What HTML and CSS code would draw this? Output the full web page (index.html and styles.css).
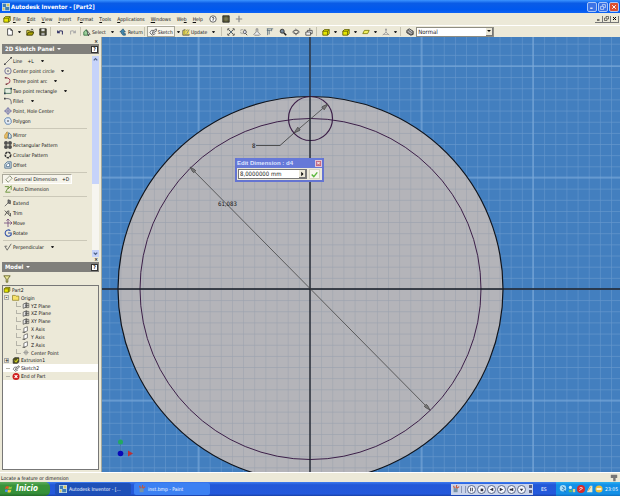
FILE: index.html
```html
<!DOCTYPE html>
<html lang="en">
<head>
    <meta charset="UTF-8">
    <meta name="viewport" content="width=device-width, initial-scale=1.0">
    <title>Autodesk Inventor - [Part2]</title>
    <link rel="stylesheet" href="styles.css">
</head>
<body>

<!-- Shared icons -->
<svg class="hidden">
    <symbol id="i-cube" viewBox="0 0 10 10"><path d="M1 4l2-2h6v5l-2 2H1z" fill="#e8e800" stroke="#565600"/><path d="M1 4h6v5M7 4l2-2" fill="none" stroke="#565600"/></symbol>
    <symbol id="i-new" viewBox="0 0 10 10"><path d="M2 1h4l2 2v6H2z" fill="#fff" stroke="#333"/><path d="M6 1v2h2" fill="none" stroke="#333"/></symbol>
    <symbol id="i-open" viewBox="0 0 10 10"><path d="M1 9V3h3l1 1h3v1" fill="#f2e65a" stroke="#444400"/><path d="M1 9l2-4h7L8 9z" fill="#a8a000" stroke="#333300"/><path d="M6 2q2-2 3 1" fill="none" stroke="#333"/></symbol>
    <symbol id="i-save" viewBox="0 0 10 10"><path d="M1 1h8v8H1z" fill="#4b4b30" stroke="#222"/><path d="M3 1h4v3H3z" fill="#ddd"/><path d="M3 6h4v3H3z" fill="#aaa"/></symbol>
    <symbol id="i-undo" viewBox="0 0 10 10"><path d="M2 3v3h3M2 6q3-4 6-2v4" fill="none" stroke="#333366" stroke-width="1.3"/></symbol>
    <symbol id="i-redo" viewBox="0 0 10 10"><path d="M8 3v3H5M8 6q-3-4-6-2v4" fill="none" stroke="#aaa" stroke-width="1.3"/></symbol>
    <symbol id="i-select" viewBox="0 0 10 10"><path d="M1 9V5l3-3 2 4v3z" fill="#9cd09c" stroke="#2d6b3a"/><path d="M5 3l4 5-2 0 0 2z" fill="#fff" stroke="#333" stroke-width=".8"/></symbol>
    <symbol id="i-return" viewBox="0 0 10 10"><path d="M5 1L1 5h2v2l2 2h3V7H6V5h2z" fill="#3f87ad" stroke="#1c4460" stroke-width=".7"/></symbol>
    <symbol id="i-sketch" viewBox="0 0 10 10"><path d="M6 3H3L1 6l3 3 4-2" fill="#fff" stroke="#555"/><path d="M4 7l1-3 4-3 1 2-4 3z" fill="#ddd" stroke="#333" stroke-width=".8"/></symbol>
    <symbol id="i-update" viewBox="0 0 10 10"><path d="M1 3l3-1v6h5v1H1z" fill="#e5d640" stroke="#555"/><path d="M4 2h5v6H4z" fill="#eedf58"/><path d="M6 7l3-5M5 4l2-2" stroke="#778" fill="none"/></symbol>
    <symbol id="i-zoomall" viewBox="0 0 10 10"><path d="M1 3V1h2M7 1h2v2M9 7v2H7M3 9H1V7M2 2l2 2M8 2L6 4M2 8l2-2M8 8L6 6" fill="none" stroke="#333"/><circle cx="5" cy="5" r="1.5" fill="#556a78"/></symbol>
    <symbol id="i-zoomwin" viewBox="0 0 10 10"><path d="M1 2h6v5H1z" fill="none" stroke="#777" stroke-dasharray="1 1"/><circle cx="6" cy="5" r="2" fill="#dde" stroke="#555"/><path d="M7 7l2 2" stroke="#333"/></symbol>
    <symbol id="i-zoom" viewBox="0 0 10 10"><path d="M4 1h2v4l3 3-1 1H2L1 8l3-3z" fill="#eee" stroke="#777"/></symbol>
    <symbol id="i-pan" viewBox="0 0 10 10"><path d="M1 1h8M1 3h5M2 1v8M4 3v5M7 1v3" fill="none" stroke="#556a78"/></symbol>
    <symbol id="i-glass" viewBox="0 0 10 10"><circle cx="4" cy="4" r="2.5" fill="#778899" stroke="#222"/><path d="M6 6l3 3" stroke="#222" stroke-width="2"/></symbol>
    <symbol id="i-rotate3" viewBox="0 0 10 10"><path d="M5 1l3 3-3 5-3-5z" fill="none" stroke="#777"/><ellipse cx="5" cy="5" rx="4" ry="2" fill="none" stroke="#555"/></symbol>
    <symbol id="i-look" viewBox="0 0 10 10"><path d="M1 5h6v4H1zM3 5V3h6v4H7" fill="#eee" stroke="#444"/><path d="M6 0v3" stroke="#555"/></symbol>
    <symbol id="i-plane" viewBox="0 0 10 10"><path d="M1 7l2-4h6L7 7z" fill="#f2f060" stroke="#777700"/></symbol>
    <symbol id="i-tree" viewBox="0 0 10 10"><path d="M5 1v4M1 9l4-4 4 4M1 8h8" fill="none" stroke="#999"/><path d="M4 1h2v2H4z" fill="#999"/></symbol>
    <symbol id="i-mat" viewBox="0 0 10 10"><path d="M1 3l3-2 5 3v4L6 9 1 6z" fill="#777" stroke="#333"/><path d="M2 4l5 3M4 2l4 3" stroke="#ddd"/></symbol>
    <symbol id="i-help" viewBox="0 0 10 10"><circle cx="5" cy="5" r="4" fill="#fff" stroke="#444"/><path d="M4 4q0-1 1-1t1 1-1 2v1" fill="none" stroke="#222"/></symbol>
    <symbol id="i-dark" viewBox="0 0 10 10"><path d="M1 1h8v8H1z" fill="#555533" stroke="#222"/><path d="M2 4h6M2 6h6M5 2v6" stroke="#999977" stroke-width=".6"/></symbol>
    <symbol id="i-cross" viewBox="0 0 10 10"><path d="M5 1v8M1 5h8" stroke="#888" stroke-width="1.5"/></symbol>
    <symbol id="i-line" viewBox="0 0 10 10"><path d="M1 9L9 1" stroke="#555"/><path d="M0 8h2v2H0zM8 0h2v2H8z" fill="#444"/></symbol>
    <symbol id="i-circle" viewBox="0 0 10 10"><circle cx="5" cy="5" r="4" fill="none" stroke="#5a5a90"/><circle cx="5" cy="5" r="1" fill="#445"/></symbol>
    <symbol id="i-arc" viewBox="0 0 10 10"><path d="M2 1q7 0 5 6l-4 2" fill="none" stroke="#a03c50" stroke-width="1.2"/><path d="M1 0h2v2H1zM2 8h2v2H2z" fill="#744"/></symbol>
    <symbol id="i-rect" viewBox="0 0 10 10"><path d="M1 2h8v6H1z" fill="#e4ece0" stroke="#3f6a50"/><path d="M0 7h2v2H0zM8 1h2v2H8z" fill="#345"/></symbol>
    <symbol id="i-fillet" viewBox="0 0 10 10"><path d="M1 2h4q4 0 4 4v3" fill="none" stroke="#556"/><path d="M0 1h2v2H0z" fill="#444"/></symbol>
    <symbol id="i-point" viewBox="0 0 10 10"><circle cx="5" cy="5" r="3" fill="none" stroke="#6a6aa5"/><path d="M5 0v10M0 5h10" stroke="#6a6aa5"/></symbol>
    <symbol id="i-poly" viewBox="0 0 10 10"><path d="M3 1h4l2 3v3L7 9H3L1 6V3z" fill="#e3ebf5" stroke="#4671a8"/><circle cx="5" cy="5" r="1" fill="#333"/></symbol>
    <symbol id="i-mirror" viewBox="0 0 10 10"><path d="M1 9V5l3-4v8z" fill="#f5cf77" stroke="#b9862c"/><path d="M6 2l3 3v4H5z" fill="#dfe8ef" stroke="#326080"/></symbol>
    <symbol id="i-rpat" viewBox="0 0 10 10"><path d="M1 1h3v3H1zM6 1h3v3H6zM1 6h3v3H1zM6 6h3v3H6z" fill="#777" stroke="#222"/></symbol>
    <symbol id="i-cpat" viewBox="0 0 10 10"><circle cx="5" cy="5" r="3.4" fill="none" stroke="#333" stroke-width="2" stroke-dasharray="3 1"/></symbol>
    <symbol id="i-offset" viewBox="0 0 10 10"><path d="M1 9V4l3-3h5v8z" fill="#cfdce5" stroke="#4c6f8a"/><path d="M3 7V5l2-2h2v4z" fill="#fff" stroke="#4c6f8a"/></symbol>
    <symbol id="i-dim" viewBox="0 0 10 10"><path d="M1 6l5-5 3 3-5 5zM1 6l3 3M6 1l3 3" fill="none" stroke="#8a9078"/></symbol>
    <symbol id="i-auto" viewBox="0 0 10 10"><path d="M1 2h5L2 9h6M5 5l4-4v5" fill="none" stroke="#6e9440" stroke-width="1.2"/></symbol>
    <symbol id="i-extend" viewBox="0 0 10 10"><path d="M1 9l5-5M5 1l3 1v4L5 5z" fill="#777" stroke="#555"/></symbol>
    <symbol id="i-trim" viewBox="0 0 10 10"><path d="M1 2l7 7M1 8l4-6M6 2v4M8 5v4" fill="none" stroke="#333"/></symbol>
    <symbol id="i-move" viewBox="0 0 10 10"><path d="M5 0v10M0 5h10M8 3l2 2-2 2M3 2l2-2 2 2" fill="none" stroke="#704878"/></symbol>
    <symbol id="i-rot" viewBox="0 0 10 10"><path d="M8 2a4 4 0 1 0 1 5M5 5h4v3" fill="none" stroke="#2f4fa8" stroke-width="1.3"/></symbol>
    <symbol id="i-perp" viewBox="0 0 10 10"><path d="M1 4l3 5 5-8M1 4h3" fill="none" stroke="#555"/></symbol>
    <symbol id="i-folder" viewBox="0 0 10 10"><path d="M0 2h4l1 1h4v6H0z" fill="#f7e26a" stroke="#8a7a20"/></symbol>
    <symbol id="i-wplane" viewBox="0 0 10 10"><path d="M1 3l5-2v6L1 9z" fill="#fff" stroke="#444"/><path d="M4 2h5v6H4zM6 2v6M4 5h5" fill="none" stroke="#555"/></symbol>
    <symbol id="i-axis" viewBox="0 0 10 10"><path d="M2 3l5-2v6L2 9z" fill="#fff" stroke="#555"/><path d="M0 9h4" stroke="#333"/></symbol>
    <symbol id="i-cpoint" viewBox="0 0 10 10"><path d="M5 1v8M1 5h8M3 3h4v4H3z" fill="none" stroke="#888" stroke-width=".8"/></symbol>
    <symbol id="i-extr" viewBox="0 0 10 10"><path d="M1 3l2-2h6v6L7 9H1z" fill="#555520" stroke="#222"/><path d="M3 5l2 2 3-4" fill="none" stroke="#d5d520" stroke-width="1.5"/></symbol>
    <symbol id="i-end" viewBox="0 0 10 10"><circle cx="5" cy="5" r="5" fill="#cf1d1d"/><path d="M3 3l4 4M7 3L3 7" stroke="#fff" stroke-width="1.6"/></symbol>
    <symbol id="i-funnel" viewBox="0 0 10 10"><path d="M1 1h8L6 5v4H4V5z" fill="#eeea9a" stroke="#55551a"/></symbol>
    <symbol id="i-flag" viewBox="0 0 10 10"><path d="M1 2q2-1 4 0L4 5q-2-1-4 0z" fill="#e8542a"/><path d="M5 2q2 1 4 0L8 5q-2 1-4 0z" fill="#8ac43e"/><path d="M0 6q2-1 4 0L3 9Q1 8-1 9z" fill="#4d8eea"/><path d="M4 6q2 1 4 0L7 9Q5 10 3 9z" fill="#f5cd3c"/></symbol>
    <symbol id="i-app" viewBox="0 0 10 10"><path d="M0 0h10v10H0z" fill="#c6dbe8"/><path d="M1 1h4v4H1zM4 5h5v4H4z" fill="#3f7fb5"/><path d="M6 1h3v3H6zM1 6h2v3H1z" fill="#d8c65a"/></symbol>
    <symbol id="i-paint" viewBox="0 0 10 10"><path d="M2 4h5v5H2z" fill="#7892a5"/><path d="M3 4L2 1M5 4l1-4M6 4l3-2" stroke="#c45838" stroke-width="1.4"/></symbol>
</svg>

<header class="titlebar">
    <svg class="icon"><use href="#i-app"/></svg>
    <h1>Autodesk Inventor - [Part2]</h1>
    <div class="window-buttons">
        <button aria-label="Minimize"><svg viewBox="0 0 10 10"><path d="M2 7h4" stroke="#fff" stroke-width="2"/></svg></button>
        <button aria-label="Restore"><svg viewBox="0 0 10 10"><path d="M4 3V1h5v5H7M1 4h5v5H1z" fill="none" stroke="#fff"/></svg></button>
        <button class="close" aria-label="Close"><svg viewBox="0 0 10 10"><path d="M2 2l6 6M8 2L2 8" stroke="#fff" stroke-width="1.6"/></svg></button>
    </div>
</header>

<nav class="menubar">
    <svg class="icon"><use href="#i-cube"/></svg>
    <button><u>F</u>ile</button>
    <button><u>E</u>dit</button>
    <button><u>V</u>iew</button>
    <button><u>I</u>nsert</button>
    <button>F<u>o</u>rmat</button>
    <button><u>T</u>ools</button>
    <button><u>A</u>pplications</button>
    <button><u>W</u>indows</button>
    <button>We<u>b</u></button>
    <button><u>H</u>elp</button>
    <div class="menu-icons">
        <button aria-label="Help topics"><svg class="icon"><use href="#i-help"/></svg></button>
        <button aria-label="Design doctor"><svg class="icon"><use href="#i-dark"/></svg></button>
        <button aria-label="Add"><svg class="icon"><use href="#i-cross"/></svg></button>
    </div>
    <div class="doc-buttons">
        <button aria-label="Minimize document"><svg viewBox="0 0 10 10"><path d="M2 8h5" stroke="#000" stroke-width="2"/></svg></button>
        <button aria-label="Restore document"><svg viewBox="0 0 10 10"><path d="M4 3V1h5v5H7M1 4h5v5H1z" fill="none" stroke="#000"/></svg></button>
        <button aria-label="Close document"><svg viewBox="0 0 10 10"><path d="M2 2l6 6M8 2L2 8" stroke="#000" stroke-width="2"/></svg></button>
    </div>
</nav>

<div class="toolbar">
    <button class="tool" aria-label="New"><svg class="icon"><use href="#i-new"/></svg></button>
    <span class="arrow"></span>
    <button class="tool" aria-label="Open"><svg class="icon"><use href="#i-open"/></svg></button>
    <button class="tool" aria-label="Save"><svg class="icon"><use href="#i-save"/></svg></button>
    <span class="divider"></span>
    <button class="tool" aria-label="Undo"><svg class="icon"><use href="#i-undo"/></svg></button>
    <button class="tool" aria-label="Redo"><svg class="icon"><use href="#i-redo"/></svg></button>
    <span class="divider"></span>
    <button class="text-tool"><svg class="icon"><use href="#i-select"/></svg>Select</button>
    <span class="arrow wide"></span>
    <button class="text-tool"><svg class="icon"><use href="#i-return"/></svg>Return</button>
    <span class="divider"></span>
    <button class="text-tool pressed"><svg class="icon"><use href="#i-sketch"/></svg>Sketch</button>
    <span class="arrow"></span>
    <button class="text-tool"><svg class="icon"><use href="#i-update"/></svg>Update</button>
    <span class="arrow wide"></span>
    <span class="divider"></span>
    <button class="tool" aria-label="Zoom all"><svg class="icon"><use href="#i-zoomall"/></svg></button>
    <button class="tool" aria-label="Zoom window"><svg class="icon"><use href="#i-zoomwin"/></svg></button>
    <button class="tool" aria-label="Zoom"><svg class="icon"><use href="#i-zoom"/></svg></button>
    <button class="tool" aria-label="Pan"><svg class="icon"><use href="#i-pan"/></svg></button>
    <button class="tool" aria-label="Zoom selected"><svg class="icon"><use href="#i-glass"/></svg></button>
    <button class="tool" aria-label="Rotate view"><svg class="icon"><use href="#i-rotate3"/></svg></button>
    <button class="tool" aria-label="Look at"><svg class="icon"><use href="#i-look"/></svg></button>
    <span class="divider"></span>
    <button class="tool" aria-label="Display mode"><svg class="icon"><use href="#i-cube"/></svg></button>
    <span class="arrow"></span>
    <button class="tool" aria-label="Camera"><svg class="icon"><use href="#i-cube"/></svg></button>
    <span class="arrow"></span>
    <button class="tool" aria-label="Shadow"><svg class="icon"><use href="#i-plane"/></svg></button>
    <span class="arrow"></span>
    <button class="tool" aria-label="Analysis"><svg class="icon"><use href="#i-tree"/></svg></button>
    <span class="arrow"></span>
    <span class="divider"></span>
    <button class="tool" aria-label="Material"><svg class="icon"><use href="#i-mat"/></svg></button>
    <div class="style-box">
        <select aria-label="Style"><option>Normal</option></select>
        <span class="drop"><i class="down"></i></span>
    </div>
</div>

<main class="workspace">
    <aside class="sidebar">
        <div class="grip"><button aria-label="Close panel">×</button></div>
        <h2 class="panel-title">2D Sketch Panel <i class="down"></i><button aria-label="Panel help">?</button></h2>
        <div class="sketch-panel">
            <div class="commands">
                <button><svg class="icon"><use href="#i-line"/></svg>Line <kbd>+L</kbd><span class="arrow"></span></button>
                <button><svg class="icon"><use href="#i-circle"/></svg>Center point circle<span class="arrow"></span></button>
                <button><svg class="icon"><use href="#i-arc"/></svg>Three point arc<span class="arrow"></span></button>
                <button><svg class="icon"><use href="#i-rect"/></svg>Two point rectangle<span class="arrow"></span></button>
                <button><svg class="icon"><use href="#i-fillet"/></svg>Fillet<span class="arrow"></span></button>
                <button><svg class="icon"><use href="#i-point"/></svg>Point, Hole Center</button>
                <button><svg class="icon"><use href="#i-poly"/></svg>Polygon</button>
                <hr>
                <button><svg class="icon"><use href="#i-mirror"/></svg>Mirror</button>
                <button><svg class="icon"><use href="#i-rpat"/></svg>Rectangular Pattern</button>
                <button><svg class="icon"><use href="#i-cpat"/></svg>Circular Pattern</button>
                <button><svg class="icon"><use href="#i-offset"/></svg>Offset</button>
                <hr>
                <button class="active"><svg class="icon"><use href="#i-dim"/></svg>General Dimension <kbd>+D</kbd></button>
                <button><svg class="icon"><use href="#i-auto"/></svg>Auto Dimension</button>
                <hr>
                <button><svg class="icon"><use href="#i-extend"/></svg>Extend</button>
                <button><svg class="icon"><use href="#i-trim"/></svg>Trim</button>
                <button><svg class="icon"><use href="#i-move"/></svg>Move</button>
                <button><svg class="icon"><use href="#i-rot"/></svg>Rotate</button>
                <hr>
                <button><svg class="icon"><use href="#i-perp"/></svg>Perpendicular<span class="arrow"></span></button>
            </div>
            <div class="scrollbar">
                <svg viewBox="0 0 8 8"><path d="M2 5l2-2 2 2" fill="none" stroke="#4d6185" stroke-width="1.4"/></svg>
                <div class="thumb"></div>
                <svg class="bottom" viewBox="0 0 8 8"><path d="M2 3l2 2 2-2" fill="none" stroke="#4d6185" stroke-width="1.4"/></svg>
            </div>
        </div>

        <div class="grip"><button aria-label="Close browser">×</button></div>
        <h2 class="panel-title">Model <i class="down"></i><button aria-label="Browser help">?</button></h2>
        <div class="filter"><button aria-label="Filter"><svg class="icon"><use href="#i-funnel"/></svg></button></div>
        <div class="browser">
            <ul class="tree">
                <li><svg class="icon"><use href="#i-cube"/></svg>Part2</li>
                <li class="l1"><b class="toggle">-</b><svg class="icon"><use href="#i-folder"/></svg>Origin</li>
                <li class="l2"><svg class="icon"><use href="#i-wplane"/></svg>YZ Plane</li>
                <li class="l2"><svg class="icon"><use href="#i-wplane"/></svg>XZ Plane</li>
                <li class="l2"><svg class="icon"><use href="#i-wplane"/></svg>XY Plane</li>
                <li class="l2"><svg class="icon"><use href="#i-axis"/></svg>X Axis</li>
                <li class="l2"><svg class="icon"><use href="#i-axis"/></svg>Y Axis</li>
                <li class="l2"><svg class="icon"><use href="#i-axis"/></svg>Z Axis</li>
                <li class="l2"><svg class="icon"><use href="#i-cpoint"/></svg>Center Point</li>
                <li class="l1"><b class="toggle">+</b><svg class="icon"><use href="#i-extr"/></svg>Extrusion1</li>
                <li class="l1 current"><b class="stub"></b><svg class="icon"><use href="#i-sketch"/></svg>Sketch2</li>
                <li class="l1"><b class="stub"></b><svg class="icon"><use href="#i-end"/></svg>End of Part</li>
            </ul>
        </div>
    </aside>

    <section class="canvas">
        <svg class="drawing" viewBox="102 37 518 436" preserveAspectRatio="xMinYMin slice">
            <defs>
                <pattern id="minor" x="310" y="289" width="11.15" height="11.15" patternUnits="userSpaceOnUse">
                    <path d="M0 0H11.15M0 0V11.15" stroke="#6496cc" stroke-width="1.2"/>
                </pattern>
                <pattern id="major" x="254.25" y="233.25" width="111.5" height="111.5" patternUnits="userSpaceOnUse">
                    <path d="M0 55.75H111.5M55.75 0V111.5" stroke="#7dabdb" stroke-width="1"/>
                </pattern>
                <pattern id="face" x="310" y="289" width="11.15" height="11.15" patternUnits="userSpaceOnUse">
                    <path d="M0 0H11.15M0 0V11.15" stroke="#9da3af" stroke-width="1.2"/>
                </pattern>
                <marker id="tip" viewBox="0 0 10 6" refX="10" refY="3" markerWidth="8" markerHeight="4" markerUnits="userSpaceOnUse" orient="auto-start-reverse">
                    <path d="M0 0l10 3-10 3z" fill="#777" stroke="#444"/>
                </marker>
            </defs>
            <rect x="102" y="37" width="518" height="436" fill="#437fbf"/>
            <rect x="102" y="37" width="518" height="436" fill="url(#minor)"/>
            <rect x="102" y="37" width="518" height="436" fill="url(#major)"/>
            <circle cx="310.5" cy="289" r="192.5" fill="#b4b4b9"/>
            <circle cx="310.5" cy="289" r="192.5" fill="url(#face)" stroke="#10141c" stroke-width="1.2"/>
            <circle cx="310.5" cy="289" r="170.5" fill="none" stroke="#3c1f48"/>
            <circle cx="310.5" cy="118.5" r="22" fill="none" stroke="#3c1f48" stroke-width="1.2"/>
            <path d="M102 289H620M310 37V473" stroke="#151a24" stroke-width="1.3"/>
            <path d="M190 167L430 410" stroke="#444" stroke-width=".8" marker-start="url(#tip)" marker-end="url(#tip)"/>
            <path d="M328 104L294 133" stroke="#444" stroke-width=".8" marker-start="url(#tip)" marker-end="url(#tip)"/>
            <path d="M294 133L280 145.500H256" fill="none" stroke="#333" stroke-width=".8"/>
            <text x="252" y="148">8</text>
            <text x="218" y="206">61,083</text>
            <!-- axis triad -->
            <path d="M120.500 453v-10M120.500 453.500h10" stroke="#4a78b0"/>
            <circle cx="120.500" cy="442" r="2.500" fill="#22a860"/>
            <circle cx="120.500" cy="453.500" r="2.800" fill="#0808b8"/>
            <path d="M128 450.500l5 3-5 3z" fill="#b83238"/>
        </svg>

        <form class="dialog">
            <div class="dialog-title"><label for="dimension">Edit Dimension : d4</label><button type="button" aria-label="Close dialog">×</button></div>
            <div class="dialog-body">
                <div class="field">
                    <input id="dimension" type="text" value="8,0000000 mm">
                    <button type="button" aria-label="More"><svg viewBox="0 0 8 8"><path d="M3 1l3 3-3 3z"/></svg></button>
                </div>
                <button type="button" class="ok" aria-label="OK"><svg viewBox="0 0 10 10"><path d="M1 5l3 3 5-6" fill="none" stroke="#5ab83c" stroke-width="2"/></svg></button>
            </div>
        </form>
    </section>
</main>

<div class="statusbar">Locate a feature or dimension<svg class="icon" viewBox="0 0 10 10"><path d="M1 1h8v4H1zM4 5h3v4H4z" fill="#777"/></svg></div>

<footer class="taskbar">
    <button class="start"><svg class="icon"><use href="#i-flag"/></svg>Inicio</button>
    <button class="task selected"><svg class="icon"><use href="#i-app"/></svg>Autodesk Inventor - [...</button>
    <button class="task"><svg class="icon"><use href="#i-paint"/></svg>inst.bmp - Paint</button>
    <div class="player">
        <svg class="icon"><use href="#i-paint"/></svg>
        <span class="bars"></span>
        <button aria-label="Pause"><svg viewBox="0 0 8 8"><path d="M3 2v4M5 2v4" stroke="#334"/></svg></button>
        <button aria-label="Stop"><svg viewBox="0 0 8 8"><path d="M3 3h3v3H3z" fill="#334"/></svg></button>
        <button aria-label="Previous"><svg viewBox="0 0 8 8"><path d="M6 2L2 4l4 2z" fill="#334"/></svg></button>
        <button aria-label="Next"><svg viewBox="0 0 8 8"><path d="M2 2l4 2-4 2z" fill="#334"/></svg></button>
        <button aria-label="Mute"><svg viewBox="0 0 8 8"><path d="M2 3h2l2-1v4L4 5H2z" fill="#334"/></svg></button>
        <button aria-label="Volume"><svg viewBox="0 0 8 8"><path d="M2 3l2 3 2-3z" fill="#334"/></svg></button>
        <span class="knobs"></span>
    </div>
    <span class="lang">ES</span>
    <div class="tray">
        <svg viewBox="0 0 10 10"><circle cx="5" cy="4" r="4" fill="#a8dcf5"/><path d="M4 2l3 2-3 2M6 6l2 3" fill="none" stroke="#1763a5"/></svg>
        <svg viewBox="0 0 10 10"><circle cx="3" cy="3" r="2" fill="#d6eef5"/><path d="M1 9V6h4v3z" fill="#55bb77"/><path d="M6 9V5h3v4z" fill="#e0d68a"/></svg>
        <svg viewBox="0 0 10 10"><circle cx="5" cy="5" r="5" fill="#d92a2a"/><path d="M3 4q2-2 4 0L3 7" fill="none" stroke="#fff"/></svg>
        <svg viewBox="0 0 10 10"><path d="M1 9l4-8h3v8z" fill="#eee8c5"/><path d="M3 7l3-5" stroke="#d08a30"/></svg>
        <svg viewBox="0 0 10 10"><circle cx="5" cy="5" r="4.500" fill="#f3c03a"/><path d="M2 5h6" stroke="#fff" stroke-width="2"/></svg>
        <time>23:05</time>
    </div>
</footer>

</body>
</html>
```
FILE: styles.css
```css
* {
    box-sizing: border-box;
}
body {
    display: flex;
    flex-direction: column;
    height: 100vh;
    margin: 0;
    overflow: hidden;
    background-color: #ece9d8;
    color: #111;
    font-family: "DejaVu Sans Condensed", "Open Sans", sans-serif;
    font-size: 5px;
    line-height: 8px;
}
button {
    display: flex;
    align-items: center;
    flex: none;
    margin: 0;
    padding: 0;
    border: none;
    background: none;
    color: inherit;
    font: inherit;
    white-space: nowrap;
}
.hidden {
    display: none;
}
.icon {
    flex: none;
    width: 8px;
    height: 8px;
}
.down {
    display: inline-block;
    border: 2px solid transparent;
    border-top-color: currentColor;
    border-bottom: none;
}

/* title bar */
.titlebar {
    display: flex;
    align-items: center;
    flex: none;
    height: 13px;
    padding: 0 1px 0 2px;
    background: linear-gradient(#3c94ff, #0a5be6 25%, #0058ee 75%, #0f64f5);
    color: #fff;
}
.titlebar h1 {
    margin: 0 auto 0 1px;
    font-size: 6px;
}
.window-buttons {
    display: flex;
    gap: 1px;
}
.window-buttons button {
    width: 10px;
    height: 10px;
    padding: 1px;
    border: 1px solid #a9c6f7;
    border-radius: 2px;
    background-color: #3c73e6;
}
.window-buttons .close {
    background-color: #dc5030;
}

/* menu and toolbar */
.menubar {
    display: flex;
    align-items: center;
    flex: none;
    gap: 6px;
    height: 12px;
    padding: 0 1px 0 3px;
}
.menubar > .icon {
    margin-right: -4px;
}
.menu-icons {
    display: flex;
    gap: 5px;
}
.doc-buttons {
    display: flex;
    margin-left: auto;
}
.doc-buttons button {
    width: 8px;
    height: 7px;
    padding: 1px;
    border-right: 1px solid #777;
    border-bottom: 1px solid #777;
}
.toolbar {
    display: flex;
    align-items: center;
    flex: none;
    height: 12px;
    padding-left: 3px;
    border-top: 1px solid #fff;
}
.tool {
    justify-content: center;
    width: 13px;
    height: 11px;
}
.arrow {
    flex: none;
    width: 7px;
    height: 2px;
}
.arrow::before {
    content: "";
    display: block;
    width: 1px;
    margin: 0 auto;
    border: 1px solid transparent;
    border-top: 2px solid #222;
    border-bottom: none;
}
.arrow.wide {
    width: 13px;
}
.divider {
    flex: none;
    width: 1px;
    height: 9px;
    margin: 0 2px 0 1px;
    background-color: #c5c2b0;
}
.text-tool {
    gap: 1px;
    height: 11px;
}
.pressed {
    padding: 0 1px;
    border: 1px solid #aaa89a;
    background-color: #f7f5ec;
}
.style-box {
    display: flex;
    width: 78px;
    height: 10px;
    border: 1px solid #8e8d83;
    background-color: #fff;
}
.style-box select {
    flex: 1;
    min-width: 0;
    padding: 0 1px;
    border: none;
    appearance: none;
    background: none;
    color: #222;
    font: inherit;
    font-size: 6px;
}
.drop {
    display: flex;
    align-items: center;
    justify-content: center;
    width: 7px;
    border-right: 1px solid #777;
    border-bottom: 1px solid #777;
    background-color: #ece9d8;
}

/* side panels */
.workspace {
    display: flex;
    flex: 1;
    min-height: 0;
}
.sidebar {
    display: flex;
    flex-direction: column;
    flex: none;
    width: 102px;
    padding: 2px 2px 2px 1px;
    border-right: 1px solid #a5a99f;
}
.grip {
    display: flex;
    justify-content: flex-end;
    flex: none;
    height: 5px;
    padding-right: 1px;
    line-height: 5px;
    font-weight: bold;
}
.panel-title {
    display: flex;
    align-items: center;
    flex: none;
    gap: 3px;
    height: 10px;
    margin: 0 0 0 1px;
    padding: 0 1px 0 3px;
    background-color: #807f7b;
    color: #fff;
    font-size: 6px;
}
.panel-title button {
    justify-content: center;
    width: 7px;
    height: 7px;
    margin-left: auto;
    border: 1px solid #333;
    background-color: #fff;
    color: #222;
    font-size: 5px;
    line-height: 5px;
}
.sketch-panel {
    display: flex;
    flex: none;
    height: 203px;
    padding-top: 2px;
}
.commands {
    flex: 1;
}
.commands button {
    gap: 1px;
    height: 10px;
    padding-left: 3px;
}
.commands .arrow {
    margin-left: 4px;
}
.commands .active {
    width: 70px;
    margin-left: 1px;
    padding-left: 2px;
    border: 1px solid #aaa89a;
    border-right-color: #fff;
    border-bottom-color: #fff;
    background-color: #f6f4ea;
}
.commands kbd {
    margin-left: 4px;
    font: inherit;
}
.commands hr {
    width: 84px;
    margin: 2px 0 1px 2px;
    border: none;
    border-top: 1px solid #cbc8b8;
}
.scrollbar {
    display: flex;
    flex-direction: column;
    width: 7px;
    background-color: #f6f5f0;
}
.scrollbar svg {
    width: 7px;
    height: 7px;
    background-color: #c6d3fa;
}
.thumb {
    height: 121px;
    background-color: #c6d3fa;
}
.scrollbar .bottom {
    margin-top: auto;
}
.filter {
    display: flex;
    align-items: center;
    flex: none;
    height: 13px;
    padding-left: 2px;
}
.browser {
    flex: 1;
    min-height: 0;
    margin-left: 1px;
    border: 1px solid #777;
    background-color: #fff;
}
.tree {
    display: grid;
    grid-template-rows: repeat(12, 1fr);
    height: 94px;
    margin: 0;
    padding: 0;
    list-style: none;
}
.tree li {
    display: flex;
    align-items: center;
    gap: 1px;
    min-height: 0;
    background-color: #ece9d8;
}
.tree .current {
    background-color: #fff;
}
.tree .icon {
    height: 7px;
}
.tree .l2 {
    padding-left: 13px;
}
.tree .l2::before {
    content: "";
    width: 4px;
    align-self: stretch;
    margin-bottom: 3px;
    border-left: 1px solid #b5b3a8;
    border-bottom: 1px solid #b5b3a8;
}
.toggle {
    width: 5px;
    height: 5px;
    margin: 0 2px 0 1px;
    border: 1px solid #aaa;
    line-height: 2px;
    text-align: center;
}
.stub {
    width: 4px;
    height: 1px;
    margin: 0 1px 0 3px;
    background-color: #b5b3a8;
}

/* drawing area */
.canvas {
    position: relative;
    flex: 1;
    min-width: 0;
    background-color: #437fbf;
}
.drawing {
    display: block;
    width: 100%;
    height: 100%;
}
.drawing text {
    fill: #111;
    font-size: 6px;
}
.dialog {
    position: absolute;
    top: 121px;
    left: 133px;
    width: 89px;
    border: 2px solid #6474d2;
    border-top: none;
    background-color: #ece9d8;
}
.dialog-title {
    display: flex;
    align-items: center;
    justify-content: space-between;
    height: 10px;
    background-color: #6679d8;
    color: #dfe5ff;
    font-family: "Liberation Sans", sans-serif;
    font-size: 6px;
    font-weight: bold;
}
.dialog-title button {
    justify-content: center;
    width: 7px;
    height: 7px;
    border: 1px solid #e3c5d5;
    background-color: #c46a80;
    color: #fff;
    line-height: 5px;
}
.dialog-body {
    display: flex;
    align-items: center;
    justify-content: space-between;
    height: 12px;
    padding: 0 2px 0 1px;
}
.field {
    display: flex;
    width: 69px;
    height: 10px;
    border: 1px solid #777;
    background-color: #fff;
}
.field input {
    flex: 1;
    min-width: 0;
    padding: 0 1px;
    border: none;
    background: none;
    color: #222;
    font: inherit;
    font-size: 6px;
}
.field button {
    width: 7px;
    border-right: 1px solid #777;
    border-bottom: 1px solid #777;
    background-color: #ece9d8;
}
.ok {
    width: 11px;
    height: 10px;
    padding: 1px;
    border: 1px solid #d5d2c0;
    background-color: #f7f6ee;
}

/* status bar and taskbar */
.statusbar {
    display: flex;
    align-items: center;
    justify-content: space-between;
    flex: none;
    height: 10px;
    padding: 0 2px 0 1px;
    border-top: 1px solid #fff;
}
.taskbar {
    display: flex;
    align-items: center;
    flex: none;
    height: 14px;
    background: linear-gradient(#3d7cf0, #2258d8 20%, #2459dc 85%, #1941a5);
    color: #fff;
}
.start {
    gap: 3px;
    width: 50px;
    height: 14px;
    margin-right: 5px;
    padding-left: 5px;
    border-radius: 0 5px 5px 0;
    background: linear-gradient(#5eac5e, #3a933a 25%, #35903a 80%, #246b2a);
    font-size: 8px;
    font-style: italic;
    font-weight: bold;
}
.task {
    gap: 2px;
    width: 76px;
    height: 12px;
    margin-right: 3px;
    padding-left: 4px;
    border-radius: 2px;
    background-color: #3c81f3;
}
.task.selected {
    background-color: #1e50b8;
}
.player {
    display: flex;
    align-items: center;
    gap: 1px;
    width: 82px;
    height: 11px;
    margin-left: auto;
    padding: 0 1px;
    background-color: #c9d3ea;
}
.player button {
    width: 9px;
    height: 9px;
    border: 1px solid #5d6b8c;
    border-radius: 50%;
    background-color: #f3f6fc;
}
.bars {
    width: 5px;
    height: 7px;
    border-left: 1px solid #8a96b5;
    border-right: 1px solid #8a96b5;
}
.knobs {
    width: 3px;
    height: 8px;
    margin-left: auto;
    border-top: 3px solid #5b6080;
    border-bottom: 3px solid #5b6080;
}
.lang {
    width: 15px;
    margin-left: 8px;
}
.tray {
    display: flex;
    align-items: center;
    gap: 1px;
    height: 14px;
    padding: 0 1px 0 3px;
    background: linear-gradient(#2cb0f0, #1290e8 20%, #1490e6 85%, #0f6fc0);
}
.tray svg {
    width: 8px;
    height: 8px;
}
.tray time {
    padding: 0 1px;
}
```
